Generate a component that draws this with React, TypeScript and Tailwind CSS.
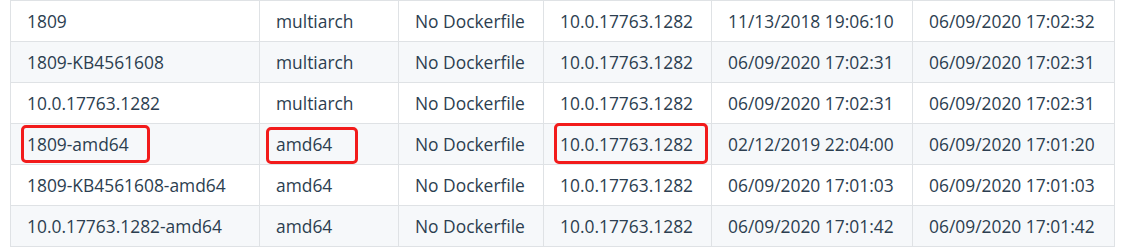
const rows = [
  ['1809', 'multiarch', 'No Dockerfile', '10.0.17763.1282', '11/13/2018 19:06:10', '06/09/2020 17:02:32'],
  ['1809-KB4561608', 'multiarch', 'No Dockerfile', '10.0.17763.1282', '06/09/2020 17:02:31', '06/09/2020 17:02:31'],
  ['10.0.17763.1282', 'multiarch', 'No Dockerfile', '10.0.17763.1282', '06/09/2020 17:02:31', '06/09/2020 17:02:31'],
  ['1809-amd64', 'amd64', 'No Dockerfile', '10.0.17763.1282', '02/12/2019 22:04:00', '06/09/2020 17:01:20'],
  ['1809-KB4561608-amd64', 'amd64', 'No Dockerfile', '10.0.17763.1282', '06/09/2020 17:01:03', '06/09/2020 17:01:03'],
  ['10.0.17763.1282-amd64', 'amd64', 'No Dockerfile', '10.0.17763.1282', '06/09/2020 17:01:42', '06/09/2020 17:01:42'],
];

const widths = ['w-[249px]', 'w-[139px]', 'w-[145px]', 'w-[168px]', 'w-[201px]', 'w-[202px]'];

export default function App() {
  return (
    <div className="w-[1128px] h-[247px] bg-white pl-[10px] overflow-hidden">
      <div className="relative w-[1104px]">
        <table
          className="w-[1104px] table-fixed border-collapse text-[17.4px] text-[#2c3e50]"
          style={{ fontFamily: '"Open Sans", "Noto Sans", sans-serif' }}
        >
          <colgroup>
            {widths.map((w, i) => (
              <col key={i} className={w} />
            ))}
          </colgroup>
          <tbody>
            {rows.map((row, i) => (
              <tr key={i} className={i % 2 === 1 ? 'bg-[#f6f8fa]' : 'bg-white'}>
                {row.map((cell, j) => (
                  <td
                    key={j}
                    className="h-[41px] border border-[#dfe2e5] px-4 py-0 leading-[20px] whitespace-nowrap"
                  >
                    {cell}
                  </td>
                ))}
              </tr>
            ))}
          </tbody>
        </table>

        {/* red highlight boxes */}
        <div className="absolute left-[11px] top-[125px] w-[129px] h-[38px] border-[3px] border-[#f21b1b] rounded-[5px]" />
        <div className="absolute left-[256px] top-[127px] w-[92px] h-[37px] border-[3px] border-[#f21b1b] rounded-[5px]" />
        <div className="absolute left-[544px] top-[123px] w-[154px] h-[41px] border-[3px] border-[#f21b1b] rounded-[5px]" />
      </div>
    </div>
  );
}
